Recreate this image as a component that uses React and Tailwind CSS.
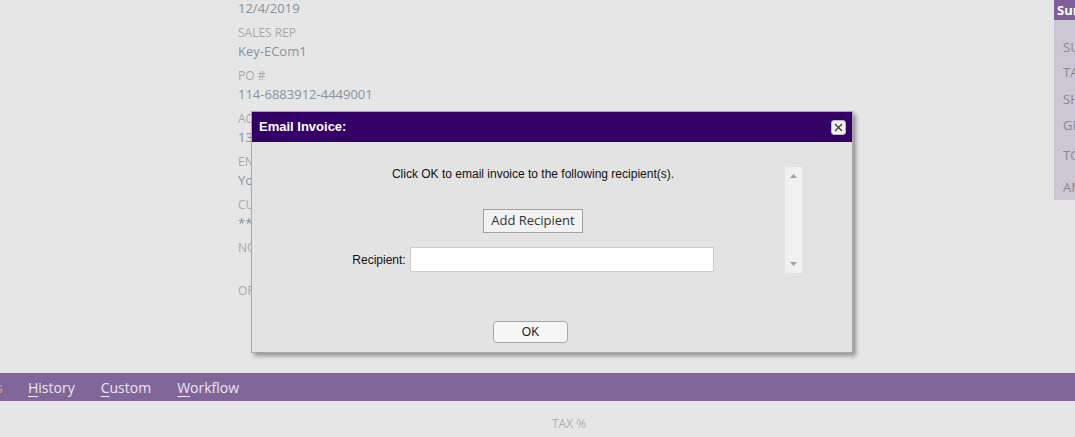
import React from "react";

const groups = [
  { label: "INVOICE DATE", value: "12/4/2019" },
  { label: "SALES REP", value: "Key-ECom1" },
  { label: "PO #", value: "114-6883912-4449001" },
  { label: "ACCOUNT", value: "13" },
  { label: "ENTERED BY", value: "You" },
  { label: "CUSTOMER", value: "****" },
  { label: "NOTES", value: "" },
  { label: "ORDER", value: "" },
];

const side = [
  { t: "SUBTOTAL", mt: "mt-[18px]" },
  { t: "TAX", mt: "mt-[7px]" },
  { t: "SHIPPING", mt: "mt-[9px]" },
  { t: "GIFT", mt: "mt-[8px]" },
  { t: "TOTAL", mt: "mt-[12px]" },
  { t: "AMOUNT", mt: "mt-[14px]" },
];

function U({ k, rest }) {
  return (
    <span>
      <span className="underline underline-offset-[3px]">{k}</span>
      {rest}
    </span>
  );
}

export default function App() {
  return (
    <div className="relative w-[1075px] h-[437px] overflow-hidden bg-[#e6e6e6] font-['Open_Sans',sans-serif]">
      <div className="flex h-[373px]">
        <div className="flex-1 pl-[238px] overflow-hidden">
          <div className="mt-[-19px] flex flex-col">
            {groups.map((g, i) => (
              <div key={i} className="mb-[7px]">
                <div className="h-[18px] leading-[18px] text-[12px] text-[#aaaaaa]">{g.label}</div>
                <div className="h-[18px] leading-[18px] text-[13px] text-[#8494a0]">{g.value}</div>
              </div>
            ))}
          </div>
        </div>
        <div className="w-[21px] flex flex-col">
          <div className="h-[20px] bg-[#7f5f9a] text-white font-bold text-[13px] leading-[20px] pl-[3px] overflow-hidden whitespace-nowrap">Summary</div>
          <div className="h-[180px] bg-[#cdc6d4] flex flex-col pl-[9px] overflow-hidden">
            {side.map((s, i) => (
              <div key={i} className={`${s.mt} h-[18px] leading-[18px] text-[13px] text-[#8a8a8a] whitespace-nowrap`}>{s.t}</div>
            ))}
          </div>
        </div>
      </div>

      <div className="h-[28px] bg-[#806699] flex items-center text-[14px] text-[#ece6f2] whitespace-nowrap">
        <span className="ml-[-4px] w-[32px] text-[#e8a070]">s</span>
        <U k="H" rest="istory" />
        <span className="ml-[26px]"><U k="C" rest="ustom" /></span>
        <span className="ml-[26px]"><U k="W" rest="orkflow" /></span>
      </div>

      <div className="pl-[552px] pt-[14px] text-[12px] text-[#b0b0b0]">TAX %</div>

      <div className="absolute left-[251px] top-[111px] w-[602px] h-[242px] bg-[#e3e3e3] border border-[#a8a8a8] shadow-[3px_3px_4px_rgba(0,0,0,0.35)] flex flex-col font-['Liberation_Sans',sans-serif]">
        <div className="h-[30px] bg-[#330066] flex items-center justify-between pl-[7px] pr-[6px]">
          <span className="text-white font-bold text-[13px]">Email Invoice:</span>
          <button className="w-[15px] h-[15px] rounded-[3px] bg-[#f2f2f2] border border-[#bbbbbb] flex items-center justify-center">
            <svg width="9" height="9" viewBox="0 0 9 9">
              <path d="M1 1L8 8M8 1L1 8" stroke="#333" strokeWidth="1.2" />
            </svg>
          </button>
        </div>
        <div className="flex pt-[24px]">
          <div className="ml-[29px] w-[504px] flex flex-col items-center">
            <div className="text-[12px] leading-[16px] text-[#111]">Click OK to email invoice to the following recipient(s).</div>
            <button className="mt-[27px] h-[24px] px-[7px] bg-[#f2f2f2] border border-[#a0a0a0] text-[13px] text-[#333] font-['Open_Sans',sans-serif]">Add Recipient</button>
            <div className="mt-[14px] flex items-center">
              <span className="text-[12px] text-[#111] mr-[4px]">Recipient:</span>
              <div className="w-[304px] h-[25px] bg-white border border-[#cccccc]" />
            </div>
          </div>
          <div className="mt-[1px] w-[17px] h-[106px] bg-[#f1f1f1] flex flex-col items-center justify-between py-[7px]">
            <svg width="7" height="4" viewBox="0 0 7 4"><path d="M0 4L3.5 0L7 4Z" fill="#a3a3a3" /></svg>
            <svg width="7" height="4" viewBox="0 0 7 4"><path d="M0 0L3.5 4L7 0Z" fill="#a3a3a3" /></svg>
          </div>
        </div>
        <div className="mt-[46px] pl-[241px]">
          <button className="w-[75px] h-[22px] rounded-[4px] bg-[#f6f6f6] border border-[#a6a6a6] text-[12px] text-[#222]">OK</button>
        </div>
      </div>
    </div>
  );
}
